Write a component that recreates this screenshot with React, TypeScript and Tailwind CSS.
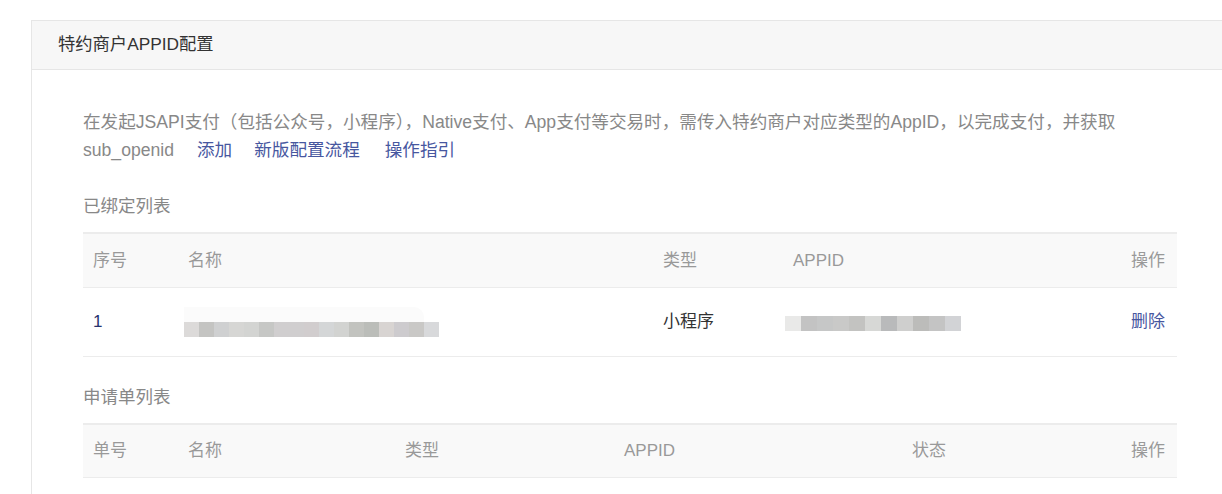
import React from "react";

const nameBlocks = ["#dcdad9", "#c4c4c2", "#cfd0d1", "#d6d6d4", "#d3d4d2", "#c6c7c5", "#d0cecf", "#d0cecf", "#d1cdce", "#d4d6d7", "#d2d3d1", "#c2c3bf", "#bbbdb9", "#d8d4d2", "#cdcbce", "#c9c8c6", "#d8d9db"];
const idBlocks = ["#e9e9e8", "#c3c3c3", "#c6c7c7", "#c9c9c8", "#c3c3c1", "#d7d8d6", "#b9babb", "#cfcfce", "#bcbcba", "#c4c4c4", "#d2d3d6"];

function Mosaic({ colors, w }: { colors: string[]; w: number }) {
  return (
    <div className="flex h-[15px] overflow-hidden rounded-r-[6px]">
      {colors.map((c, i) => (
        <div key={i} className="h-full shrink-0" style={{ width: w, backgroundColor: c }} />
      ))}
    </div>
  );
}

export default function App() {
  return (
    <div
      className="h-[494px] w-full overflow-hidden bg-white pt-[20px] pl-[31px] text-[17px]"
      style={{ fontFamily: '"Liberation Sans", "Noto Sans CJK SC", sans-serif' }}
    >
      <div className="w-[1198px] border border-[#e6e6e6] bg-white">
        <div className="flex h-[49px] items-center border-b border-[#e6e6e6] bg-[#f7f7f7] pl-[26px] text-[17.3px] text-[#333]">
          特约商户APPID配置
        </div>
        <div className="px-[51px] pt-[38px] pb-[40px]">
          <p className="text-[17.6px] leading-[28px] text-[#888]">
            在发起JSAPI支付（包括公众号，小程序），Native支付、App支付等交易时，需传入特约商户对应类型的AppID，以完成支付，并获取
            <br />
            sub_openid
            <a className="ml-[23px] text-[#47579f]">添加</a>
            <a className="ml-[22px] text-[#47579f]">新版配置流程</a>
            <a className="ml-[25px] text-[#47579f]">操作指引</a>
          </p>
          <div className="mt-[28px] text-[17.5px] leading-[28px] text-[#888]">已绑定列表</div>
          <div className="mt-[12px] border-t-2 border-[#ececec]">
            <div className="flex h-[54px] items-center border-b border-[#ececec] bg-[#f9f9f9] pl-[10px] pr-[12px] text-[#999]">
              <div className="w-[95px]">序号</div>
              <div className="w-[475px]">名称</div>
              <div className="w-[130px]">类型</div>
              <div className="flex-1">APPID</div>
              <div>操作</div>
            </div>
            <div className="flex h-[69px] items-center border-b border-[#ececec] pl-[10px] pr-[12px]">
              <div className="w-[91px] text-[#27336e]">1</div>
              <div className="w-[479px]">
                <div className="flex flex-col">
                  <div className="h-[15px] w-[240px] rounded-tr-[10px] bg-[#fbfbfb]" />
                  <Mosaic colors={nameBlocks} w={15} />
                </div>
              </div>
              <div className="w-[122px] text-[#333]">小程序</div>
              <div className="flex-1 pt-[2px]">
                <Mosaic colors={idBlocks} w={16} />
              </div>
              <a className="text-[#47579f]">删除</a>
            </div>
          </div>
          <div className="mt-[26px] text-[17.5px] leading-[28px] text-[#888]">申请单列表</div>
          <div className="mt-[12px] border-t-2 border-[#ececec]">
            <div className="flex h-[53px] items-center border-b border-[#ececec] bg-[#f9f9f9] pl-[10px] pr-[12px] text-[#999]">
              <div className="w-[95px]">单号</div>
              <div className="w-[217px]">名称</div>
              <div className="w-[219px]">类型</div>
              <div className="w-[288px]">APPID</div>
              <div className="flex-1">状态</div>
              <div>操作</div>
            </div>
          </div>
        </div>
      </div>
    </div>
  );
}
